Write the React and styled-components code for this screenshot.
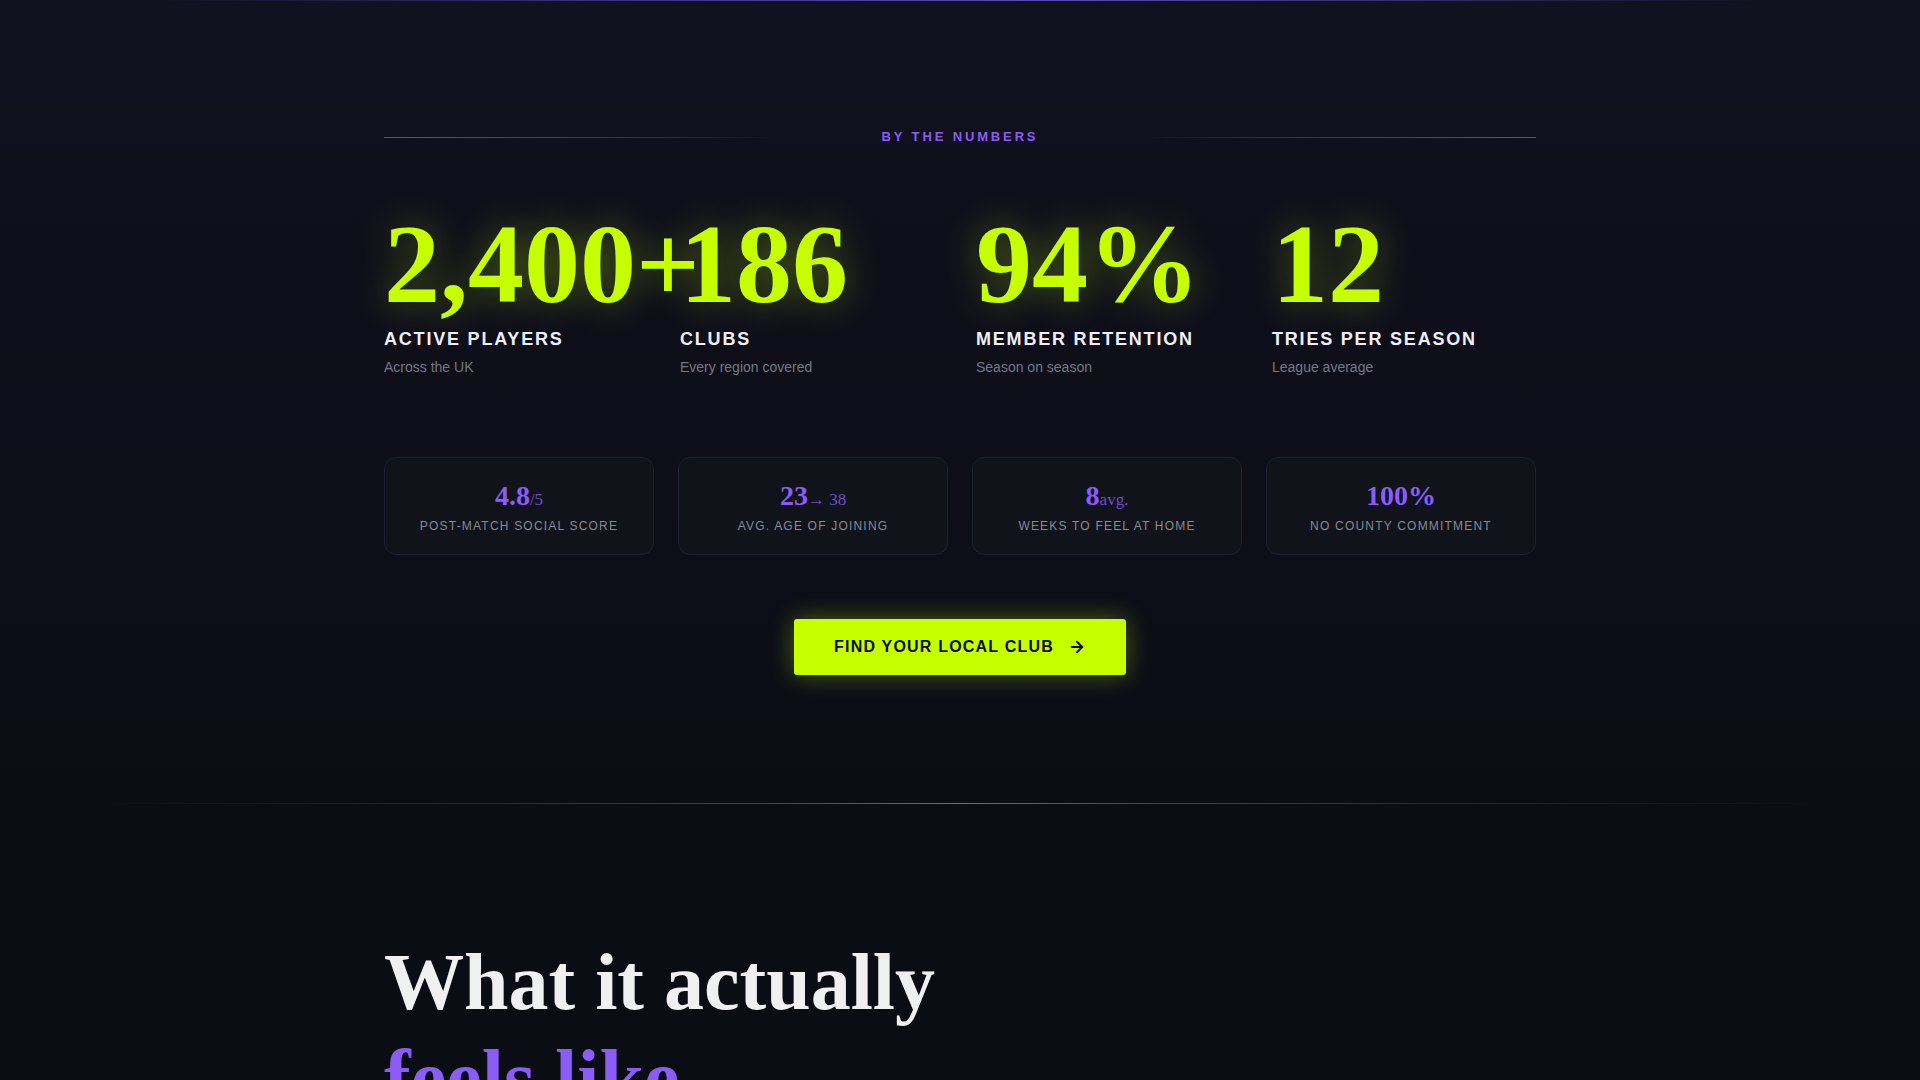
import styled, { createGlobalStyle } from "styled-components";
import { ArrowRight } from "lucide-react";

const GlobalStyle = createGlobalStyle`
    html, body {
        margin: 0;
        padding: 0;
        background: #0b0d14;
    }

    * {
        box-sizing: border-box;
    }
`;

const bigStats = [
    { value: "2,400+", label: "Active players", desc: "Across the UK" },
    { value: "186", label: "Clubs", desc: "Every region covered" },
    { value: "94%", label: "Member retention", desc: "Season on season" },
    { value: "12", label: "Tries per season", desc: "League average" },
];

const smallStats = [
    { main: "4.8", sub: "/5", label: "Post-match social score" },
    { main: "23", sub: "→ 38", label: "Avg. age of joining" },
    { main: "8", sub: "avg.", label: "Weeks to feel at home" },
    { main: "100%", sub: "", label: "No county commitment" },
];

export default function App() {
    return (
        <Page>
            <GlobalStyle />
            <NumbersSection>
                <TopGlowLine />
                <Inner>
                    <Eyebrow>
                        <EyebrowLine />
                        <EyebrowText>By the numbers</EyebrowText>
                        <EyebrowLine $flip />
                    </Eyebrow>

                    <StatGrid>
                        {bigStats.map((s) => (
                            <Stat key={s.label}>
                                <StatValue>{s.value}</StatValue>
                                <StatLabel>{s.label}</StatLabel>
                                <StatDesc>{s.desc}</StatDesc>
                            </Stat>
                        ))}
                    </StatGrid>

                    <CardRow>
                        {smallStats.map((c) => (
                            <Card key={c.label}>
                                <CardValue>
                                    {c.main}
                                    {c.sub && <CardSub>{c.sub}</CardSub>}
                                </CardValue>
                                <CardLabel>{c.label}</CardLabel>
                            </Card>
                        ))}
                    </CardRow>

                    <Actions>
                        <CtaButton>
                            Find your local club
                            <ArrowRight size={18} strokeWidth={2.6} />
                        </CtaButton>
                    </Actions>
                </Inner>
            </NumbersSection>

            <Divider />

            <FeelSection>
                <Inner>
                    <Heading>
                        What it actually
                        <br />
                        <Accent>feels like</Accent>
                    </Heading>
                </Inner>
            </FeelSection>
        </Page>
    );
}

const Page = styled.div`
    min-height: 100vh;
    background: #0b0d14;
    overflow: hidden;
`;

const NumbersSection = styled.section`
    position: relative;
    padding: 128px 0;
    background: linear-gradient(180deg, #121120 0%, #0f0f1b 30%, #0b0d15 100%);
`;

const TopGlowLine = styled.div`
    position: absolute;
    top: 0;
    left: 0;
    right: 0;
    height: 1px;
    background: linear-gradient(90deg, transparent 8%, rgba(110, 80, 230, 0.55) 35%, rgba(120, 95, 240, 0.7) 55%, transparent 92%);
`;

const Inner = styled.div`
    max-width: 1152px;
    margin: 0 auto;
`;

const Eyebrow = styled.div`
    display: flex;
    align-items: center;
    gap: 24px;
    height: 18px;
`;

const EyebrowLine = styled.div`
    flex: 1;
    height: 1px;
    background: linear-gradient(${(p) => (p.$flip ? "270deg" : "90deg")}, rgba(124, 92, 230, 0.75) 0%, rgba(110, 85, 220, 0.35) 60%, transparent 82%);
`;

const EyebrowText = styled.span`
    font-family: "Liberation Sans", Arial, sans-serif;
    font-size: 13px;
    line-height: 18px;
    font-weight: 700;
    letter-spacing: 0.22em;
    text-transform: uppercase;
    color: #8b5cf6;
`;

const StatGrid = styled.div`
    display: grid;
    grid-template-columns: repeat(4, minmax(0, 1fr));
    gap: 32px;
    margin-top: 62px;
`;

const Stat = styled.div`
    display: flex;
    flex-direction: column;
    min-width: 0;
`;

const StatValue = styled.div`
    font-family: "Liberation Serif", "Times New Roman", serif;
    font-size: 112px;
    font-weight: 700;
    line-height: 1;
    color: #c6ff00;
    white-space: nowrap;
    text-shadow: 0 0 36px rgba(198, 255, 0, 0.35);
`;

const StatLabel = styled.div`
    margin-top: 5px;
    font-family: "Liberation Sans", Arial, sans-serif;
    font-size: 18px;
    line-height: 28px;
    font-weight: 700;
    letter-spacing: 0.1em;
    text-transform: uppercase;
    color: #eef0f5;
`;

const StatDesc = styled.div`
    margin-top: 4px;
    font-family: "Liberation Sans", Arial, sans-serif;
    font-size: 14px;
    line-height: 20px;
    color: #737887;
`;

const CardRow = styled.div`
    display: grid;
    grid-template-columns: repeat(4, minmax(0, 1fr));
    gap: 24px;
    margin-top: 80px;
`;

const Card = styled.div`
    display: flex;
    flex-direction: column;
    align-items: center;
    padding: 24px 16px 20px;
    background: #11131b;
    border: 1px solid #1d2030;
    border-radius: 12px;
`;

const CardValue = styled.div`
    font-family: "Liberation Serif", "Times New Roman", serif;
    font-size: 28px;
    font-weight: 700;
    line-height: 1;
    color: #8b5cf6;
`;

const CardSub = styled.span`
    font-size: 17px;
    font-weight: 400;
    color: #6e4cc9;
`;

const CardLabel = styled.div`
    margin-top: 8px;
    font-family: "Liberation Sans", Arial, sans-serif;
    font-size: 12px;
    line-height: 16px;
    letter-spacing: 0.1em;
    text-transform: uppercase;
    color: #858a97;
`;

const Actions = styled.div`
    display: flex;
    justify-content: center;
    margin-top: 64px;
`;

const CtaButton = styled.button`
    display: inline-flex;
    align-items: center;
    gap: 14px;
    height: 56px;
    padding: 0 40px;
    border: none;
    border-radius: 3px;
    background: #c6ff00;
    color: #0b0d14;
    font-family: "Liberation Sans", Arial, sans-serif;
    font-size: 16px;
    font-weight: 700;
    letter-spacing: 0.075em;
    text-transform: uppercase;
    cursor: pointer;
    box-shadow: 0 0 24px rgba(198, 255, 0, 0.35);
`;

const Divider = styled.div`
    height: 1px;
    background: linear-gradient(90deg, transparent 5%, rgba(60, 50, 140, 0.6) 25%, rgba(75, 65, 200, 0.8) 40%, rgba(150, 150, 175, 0.7) 50%, rgba(75, 65, 200, 0.8) 60%, rgba(60, 50, 140, 0.6) 75%, transparent 95%);
`;

const FeelSection = styled.section`
    padding: 130px 0 128px;
    background: #0b0d14;
`;

const Heading = styled.h2`
    margin: 0;
    font-family: "Liberation Serif", "Times New Roman", serif;
    font-size: 80px;
    font-weight: 700;
    line-height: 1.2;
    color: #f0f0f2;
`;

const Accent = styled.span`
    color: #8b5cf6;
`;
